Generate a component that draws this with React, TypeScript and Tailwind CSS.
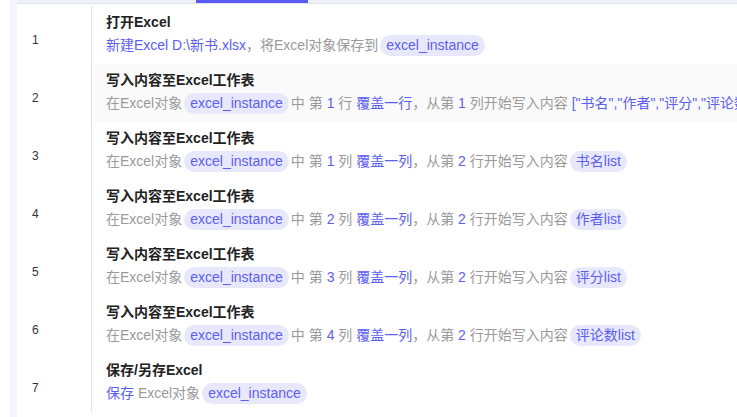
import type { ReactNode } from "react";

const FONT = "font-['Liberation_Sans','Noto_Sans_CJK_SC',sans-serif]";

function Tag({ children }: { children: ReactNode }) {
  return (
    <span className="mx-[2px] inline-block h-[21px] rounded-full bg-[#e8e8fd] px-[6px] align-top leading-[21px] text-[#5c5ef2]">
      {children}
    </span>
  );
}

function B({ children }: { children: ReactNode }) {
  return <span className="text-[#5c5ef2]">{children}</span>;
}

type Step = { title: string; body: ReactNode; shaded?: boolean };

const STEPS: Step[] = [
  {
    title: "打开Excel",
    body: (
      <>
        <B>新建Excel D:\新书.xlsx</B>，将Excel对象保存到<Tag>excel_instance</Tag>
      </>
    ),
  },
  {
    title: "写入内容至Excel工作表",
    shaded: true,
    body: (
      <>
        在Excel对象<Tag>excel_instance</Tag>中 第 <B>1</B> 行 <B>覆盖一行</B>，从第 <B>1</B> 列开始写入内容{" "}
        <B>["书名","作者","评分","评论数"]</B>
      </>
    ),
  },
  ...["书名list", "作者list", "评分list", "评论数list"].map((name, i) => ({
    title: "写入内容至Excel工作表",
    body: (
      <>
        在Excel对象<Tag>excel_instance</Tag>中 第 <B>{i + 1}</B> 列 <B>覆盖一列</B>，从第 <B>2</B> 行开始写入内容
        <Tag>{name}</Tag>
      </>
    ),
  })),
  {
    title: "保存/另存Excel",
    body: (
      <>
        <B>保存</B> Excel对象<Tag>excel_instance</Tag>
      </>
    ),
  },
];

export default function App() {
  return (
    <div className={`${FONT} flex h-[417px] w-[737px] overflow-hidden bg-white`}>
      <div className="ml-[10px] w-[7px] shrink-0 bg-[#f3f6fb]" />
      <div className="flex min-w-0 flex-1 flex-col">
        <div className="relative h-[4px] shrink-0 border-b border-[#e1e6ee] bg-[#eef2f7]">
          <div className="absolute left-[179px] top-0 h-[3px] w-[112px] bg-[#5b5cf8]" />
        </div>
        <div className="flex flex-col pt-[2px]">
          {STEPS.map((step, i) => (
            <div key={i} className="flex h-[58px]">
              <div className="flex w-[74px] shrink-0 items-center pl-[15px] pt-[9px] text-[12px] text-[#333]">
                {i + 1}
              </div>
              <div className="flex min-w-0 flex-1 border-l border-[#e3e3e3] pl-[2px]">
                <div
                  className={`flex min-w-0 flex-1 flex-col overflow-hidden pl-[12px] pt-[7px] ${step.shaded ? "bg-[#fafafa]" : ""}`}
                >
                  <div className="h-[18px] whitespace-nowrap text-[14px] font-bold leading-[18px] text-[#222]">
                    {step.title}
                  </div>
                  <div className="mt-[4px] h-[21px] whitespace-nowrap text-[14px] leading-[21px] text-[#9a9a9a]">
                    {step.body}
                  </div>
                </div>
              </div>
            </div>
          ))}
        </div>
      </div>
    </div>
  );
}
